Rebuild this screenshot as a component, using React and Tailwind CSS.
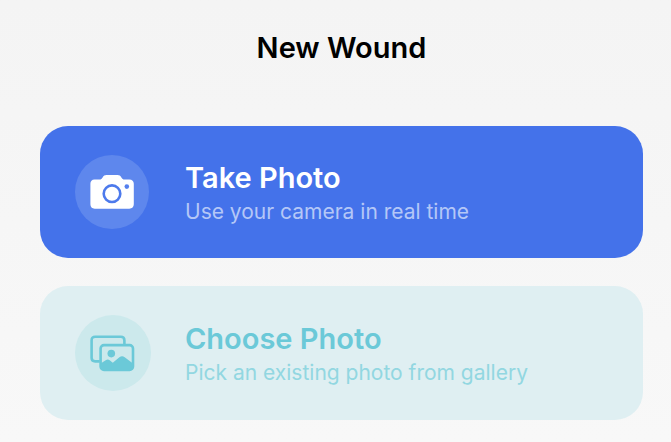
function CameraIcon() {
  return (
    <svg width="48" height="40" viewBox="0 0 48 40" aria-hidden="true">
      <path
        fill="#fff"
        d="M6.5 7.4H11.5C13 7.4 13.6 6.8 14.6 5.4C15.7 3.8 16.6 3 18.5 3H29.5C31.4 3 32.3 3.8 33.4 5.4C34.4 6.8 35 7.4 36.5 7.4H41.3C44.1 7.4 45.8 9 45.8 11.8V32.3C45.8 35.1 44.1 36.7 41.3 36.7H6.7C3.9 36.7 2.4 35.1 2.4 32.3V11.8C2.4 9 3.9 7.4 6.5 7.4Z"
      />
      <circle cx="24" cy="21.7" r="8.3" fill="none" stroke="#4d7aec" strokeWidth="2.6" />
      <circle cx="38.8" cy="14.6" r="2.3" fill="#5580ee" />
    </svg>
  );
}

function GalleryIcon() {
  return (
    <svg width="48" height="40" viewBox="0 0 48 40" aria-hidden="true">
      <path
        d="M10.8 28.4H6.2C3.8 28.4 2.6 27.2 2.6 24.8V7.4C2.6 5 3.8 3.8 6.2 3.8H31.8C34.2 3.8 35.4 5 35.4 7.4V11"
        fill="none"
        stroke="#6bc9d8"
        strokeWidth="2.6"
      />
      <rect x="11.6" y="12.1" width="32.4" height="24.8" rx="3.4" fill="none" stroke="#6bc9d8" strokeWidth="2.6" />
      <circle cx="22.3" cy="20.6" r="3.8" fill="#6bc9d8" />
      <path
        fill="#6bc9d8"
        d="M11.6 30.6L16.7 27.2C18.1 26.2 19.4 26.2 20.7 27.2L23.8 29.8L30.4 24.2C32.1 22.8 34 22.8 35.7 24.2L44 30.6V34.2Q44 37 41 37H14.6Q11.6 37 11.6 34.2Z"
      />
    </svg>
  );
}

const cardBase =
  "grid w-full grid-cols-[76px_1fr] items-center gap-x-[34px] rounded-[28px] pl-[35px] pr-6 text-left";

export default function App() {
  return (
    <main className="min-h-screen bg-linear-to-b from-[#f4f4f4] to-[#f8f8f8] pt-7 pr-7 pb-[22px] pl-10 font-['Inter','Liberation_Sans',sans-serif]">
      <h1 className="text-center text-[29px] leading-10 font-semibold text-black">New Wound</h1>

      <div className="mt-[58px] flex flex-col gap-7">
        <button type="button" className={`${cardBase} bg-[#4472ea] py-[29px]`}>
          <span className="flex size-[74px] items-center justify-center rounded-full bg-[#5e87ed]">
            <CameraIcon />
          </span>
          <span className="flex flex-col">
            <span className="text-[29px] leading-10 font-semibold text-white">Take Photo</span>
            <span className="text-[21px] leading-7 text-[#b4c7f7]">Use your camera in real time</span>
          </span>
        </button>

        <button type="button" className={`${cardBase} bg-[#dfeff2] py-[29px]`}>
          <span className="flex size-[76px] items-center justify-center rounded-full bg-[#cce9ec]">
            <GalleryIcon />
          </span>
          <span className="flex flex-col">
            <span className="text-[29px] leading-10 font-semibold text-[#6bc9d8]">Choose Photo</span>
            <span className="text-[21px] leading-7 text-[#92d7e1]">Pick an existing photo from gallery</span>
          </span>
        </button>
      </div>
    </main>
  );
}
